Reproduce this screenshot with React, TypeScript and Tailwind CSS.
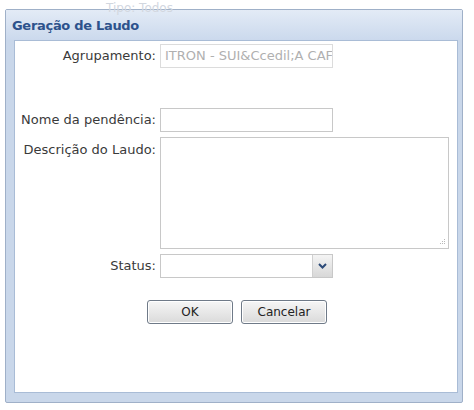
import React from "react";

const font = { fontFamily: '"DejaVu Sans", Verdana, sans-serif' };

function Label({ children, className = "" }: { children: React.ReactNode; className?: string }) {
  return (
    <div className={`w-[145px] shrink-0 pr-[4px] text-right text-[13px] text-[#3a3a3a] ${className}`}>
      {children}
    </div>
  );
}

export default function App() {
  return (
    <div className="relative h-[410px] w-[474px] bg-white pl-[5px] pt-[9px]" style={font}>
      {/* dialog */}
      <div className="flex h-[394px] w-[458px] flex-col rounded-[2px] border border-[#9fb0c8] bg-[#c9d7ea]">
        {/* title bar */}
        <div className="flex h-[30px] shrink-0 items-center bg-gradient-to-b from-[#e3ebf6] to-[#cbd9ed] pl-[6px]">
          <span className="text-[13px] leading-[15px] font-bold tracking-[-0.3px] text-[#2d528c]">Geração de Laudo</span>
        </div>

        {/* body */}
        <div className="ml-[8px] mr-[4px] flex-1 border border-[#a9bcd6] bg-white pt-[3px]">
          <div className="flex items-center">
            <Label>Agrupamento:</Label>
            <div className="h-[24px] w-[173px] overflow-hidden whitespace-nowrap border border-[#dcdcdc] bg-white px-[4px] text-[13px] leading-[22px] text-[#b0b0b0]">
              ITRON - SUI&amp;Ccedil;A CAF
            </div>
          </div>

          <div className="mt-[40px] flex items-center">
            <Label>Nome da pendência:</Label>
            <div className="h-[24px] w-[173px] border border-[#c8c8c8] bg-white" />
          </div>

          <div className="mt-[5px] flex items-start">
            <Label className="pt-[3px]">Descrição do Laudo:</Label>
            <div className="relative h-[112px] w-[289px] border border-[#c8c8c8] bg-white">
              <svg className="absolute bottom-[2px] right-[2px]" width="8" height="8" viewBox="0 0 8 8">
                <rect x="6" y="1" width="1" height="1" fill="#b8b8b8" />
                <rect x="4" y="3" width="1" height="1" fill="#b8b8b8" />
                <rect x="6" y="3" width="1" height="1" fill="#b8b8b8" />
                <rect x="2" y="5" width="1" height="1" fill="#b8b8b8" />
                <rect x="4" y="5" width="1" height="1" fill="#b8b8b8" />
                <rect x="6" y="5" width="1" height="1" fill="#b8b8b8" />
              </svg>
            </div>
          </div>

          <div className="mt-[5px] flex items-center">
            <Label>Status:</Label>
            <div className="flex h-[24px] w-[173px] border border-[#c8c8c8] bg-white">
              <div className="flex-1" />
              <div className="flex w-[20px] items-center justify-center border-l border-[#d0d0d0] bg-gradient-to-b from-[#f4f4f4] to-[#d8d8d8]">
                <svg width="9" height="6" viewBox="0 0 9 6">
                  <path d="M1 1 L4.5 4.5 L8 1" fill="none" stroke="#2c4a78" strokeWidth="2" />
                </svg>
              </div>
            </div>
          </div>

          <div className="mt-[22px] flex justify-center gap-[8px] pl-[2px]">
            <button className="h-[24px] w-[86px] rounded-[3px] border border-[#6f7a88] bg-gradient-to-b from-[#f6f6f6] to-[#dadada] text-[12px] text-[#222] shadow-[inset_0_0_0_1px_#fff]">
              OK
            </button>
            <button className="h-[24px] w-[86px] rounded-[3px] border border-[#6f7a88] bg-gradient-to-b from-[#f6f6f6] to-[#dadada] text-[12px] text-[#222] shadow-[inset_0_0_0_1px_#fff]">
              Cancelar
            </button>
          </div>
        </div>
        <div className="h-[9px] shrink-0" />
      </div>

      {/* faint filter text seen through the window frame */}
      <div className="pointer-events-none absolute left-[106px] top-[1px] text-[12px] leading-[14px] text-[#d2d7df]">Tipo: Todos</div>
    </div>
  );
}
